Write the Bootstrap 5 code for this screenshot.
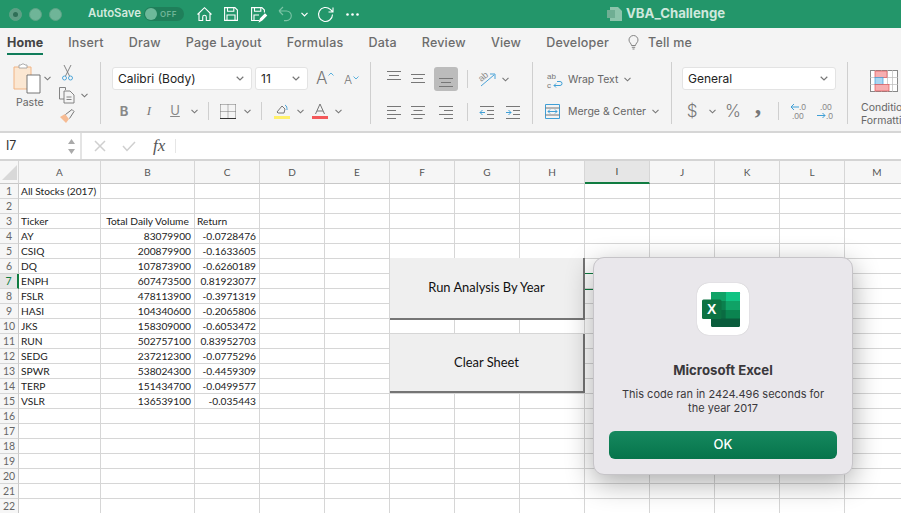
<!DOCTYPE html>
<html lang="en">
<head>
  <meta charset="UTF-8">
  <title>VBA_Challenge</title>
  <meta name="viewport" content="width=device-width, initial-scale=1">
  <link href="https://cdn.jsdelivr.net/npm/bootstrap@5.3.3/dist/css/bootstrap.min.css" rel="stylesheet">
  <style>
html, body { height: 513px; overflow: hidden; }
body { font-family: "Inter", "Liberation Sans", sans-serif; background: #fff; color: #444; }
svg { display: block; overflow: visible; }

/* title bar */
.title-bar { height: 28px; background: #23966a; color: #d3eadf; position: relative; }
.light { width: 13px; height: 13px; border-radius: 50%; background: #6fb598; border: 1px solid #5da386; }
.light-close { background: #5f9e85; position: relative; }
.light-close::after { content: ""; position: absolute; left: 3px; top: 3px; width: 5px; height: 5px; border-radius: 50%; background: #2f6f57; }
.lights { padding-left: 9px; gap: 7px; width: 88px; }
.autosave { font-size: 11.4px; font-weight: 600; width: 56px; }
.auto-toggle { width: 40px; height: 14px; border-radius: 7px; background: #1f7f5a; font-size: 8px; font-weight: 600; color: #6fb598; letter-spacing: .4px; gap: 3px; padding-left: 1px; }
.auto-knob { width: 12px; height: 12px; border-radius: 50%; background: #6db99a; }
.quick { margin-left: 8px; }
.quick > span { display: flex; justify-content: center; }
.q1 { width: 25px; } .q2 { width: 28px; } .q3 { width: 28px; } .q4 { width: 24px; } .q5 { width: 14px; } .q6 { width: 28px; } .q7 { width: 26px; }
.doc-title { position: absolute; left: 607px; top: 0; height: 28px; gap: 4px; font-size: 13.2px; font-weight: 700; color: #cfe8dd; }

/* tabs */
.tab-row { height: 30px; background: #f4f4f4; padding-left: 7px; gap: 25px; font-size: 12.5px; font-weight: 500; color: #6c6c6c; letter-spacing: .2px; }
.tab-item { height: 30px; line-height: 29px; white-space: nowrap; }
.tab-on { color: #444; font-weight: 700; letter-spacing: .1px; position: relative; }
.tab-on::after { content: ""; position: absolute; left: 0; right: 0; bottom: 3px; height: 2px; background: #107c5a; }
.tell { gap: 9px; margin: -1px 0 0 -6px; }

/* ribbon */
.ribbon { height: 75px; background: #f4f4f4; border-bottom: 2px solid #d6d6d6; overflow: hidden; }
.rb-group { height: 62px; margin-top: 4px; border-right: 1px solid #cfcfcf; flex: none; }
.rb-row { height: 24px; display: grid; align-items: center; justify-items: center; }
.rb-rows { display: flex; flex-direction: column; gap: 9px; padding-top: 5px; }
.g-paste { width: 101px; display: grid; grid-template-columns: 59px 42px; }
.paste-col { padding: 1px 0 0 13px; }
.paste-label { font-size: 10.5px; color: #666; margin-top: 2px; padding-left: 3px; }
.clip-col { gap: 6px; padding-top: 3px; }
.clip-line { display: grid; grid-template-columns: 16px 18px; justify-items: center; align-items: center; }
.g-font { width: 270px; padding-left: 11px; }
.font-top { display: flex; align-items: center; gap: 3px; }
.sel-font { width: 140px; }
.sel-size { width: 53px; }
.sel-num { width: 154px; }
.form-select.xl-sel { height: 23px; min-height: 0; padding: 0 14px 0 5px; font-size: 12px; color: #222; border: 1px solid #e3e3e3; border-radius: 3px; background-image: url("data:image/svg+xml,%3csvg xmlns='http://www.w3.org/2000/svg' viewBox='0 0 8 5'%3e%3cpath fill='none' stroke='%23777' stroke-width='1.2' d='M.7.8 4 4 7.300.8'/%3e%3c/svg%3e"); background-position: right 7px center; background-size: 8px 5px; box-shadow: none; }
.grow-wrap { display: flex; align-items: flex-end; color: #777; line-height: 1; font-weight: 300; }
.grow-big { font-size: 17px; width: 28px; margin-left: 5px; }
.grow-small { font-size: 12px; margin-left: -3px; padding-top: 3px; }
.grow-wrap svg { align-self: flex-start; margin: 2px 0 0 1px; }
.r-font2 { grid-template-columns: 22px 28px 24px 14px 14px 26px 12px 16px 26px 10px 30px 6px; margin-left: 1px; }
.rb-b { font-size: 13px; font-weight: 700; color: #888; line-height: 1; }
.rb-i { font-size: 13px; font-style: italic; font-family: "Liberation Serif", serif; color: #777; }
.rb-u { font-size: 13px; color: #888; text-decoration: underline; }
.v-sep { width: 1px; height: 18px; background: #cfcfcf; }
.g-align { width: 162px; padding-left: 12px; }
.r-al1 { grid-template-columns: 22px 26px 30px 12px 28px 8px; }
.r-al2 { grid-template-columns: 22px 26px 30px 12px 28px 24px; }
.al-on { width: 24px; height: 24px; background: #bcbcbc; border-radius: 3px; display: flex; align-items: center; justify-content: center; }
.g-wrap { width: 139px; padding: 6px 0 0 12px; font-size: 10.5px; color: #666; gap: 9px; }
.wrap-line { display: flex; align-items: center; height: 23px; white-space: nowrap; }
.wrap-ic { width: 23px; flex: none; }
.wrap-line svg.chev { margin-left: 6px; }
.wrap-top svg.wrap-glyph { margin-left: 2px; }
.g-num { width: 176px; padding-left: 10px; }
.r-num2 { grid-template-columns: 20px 20px 22px 28px 12px 28px 26px; color: #777; }
.num-d { font-size: 17px; font-weight: 300; line-height: 1; }
.num-p { font-size: 17px; font-weight: 300; line-height: 1; }
.num-c { font-size: 26px; font-weight: 700; font-family: "Liberation Serif", serif; line-height: 1; margin-top: -11px; }
.g-cond { padding: 12px 0 0 13px; font-size: 10.5px; line-height: 13px; color: #666; white-space: nowrap; }
.cond-ic { margin: 0 0 9px 9px; }

/* formula bar */
.formula-bar { height: 28px; background: #fff; border-bottom: 2px solid #d4d4d4; font-size: 12.5px; color: #333; }
.name-box { width: 82px; height: 26px; border-right: 2px solid #e4e4e4; padding: 0 5px 0 6px; }
.fx-tools { width: 98px; height: 26px; padding-left: 12px; }
.fx-text { font-family: "Liberation Serif", serif; font-style: italic; font-size: 17px; color: #555; width: 22px; margin-left: 17px; }
.fx-sep { width: 1px; height: 14px; background: #e6e6e6; }

/* sheet */
.sheet-wrap { position: relative; height: 352px; overflow: hidden; }
.sheet-grid { table-layout: fixed; width: 910px; border-collapse: separate; border-spacing: 0; font-family: "Lato", "Liberation Sans", sans-serif; font-size: 10.2px; color: #222; }
.sheet-grid td, .sheet-grid th { border-right: 1px solid #d6d6d6; border-bottom: 1px solid #d6d6d6; height: 15px; padding: 0 2px; line-height: 13px; white-space: nowrap; overflow: hidden; }
.sheet-grid thead th { height: 23px; background: #f6f6f6; font-weight: 400; color: #555; text-align: center; font-size: 10px; border-bottom: 1px solid #c8c8c8; }
.sheet-grid tbody th { background: #f6f6f6; font-weight: 400; color: #666; text-align: center; padding: 0; font-size: 10.500px; border-right-color: #c8c8c8; }
.sheet-grid .cell-num { text-align: right; padding-right: 3px; }
.sheet-grid .cell-mid { text-align: center; padding: 0; }
.sheet-grid thead th.col-on { background: #e6e6e6; border-bottom: 2px solid #107c41; color: #444; }
.sheet-grid tbody th.row-on { border-right: 2px solid #107c41; color: #107c41; background: #e6e6e6; }
.sheet-grid .cell-sel { box-shadow: 0 0 0 1px #107c41; }
.corner { width: 0; height: 0; margin: 0 1px 0 auto; border-left: 15px solid transparent; border-bottom: 15px solid #d8d8d8; }

/* sheet buttons */
.macro-btn { position: absolute; left: 390px; width: 195px; padding: 0; border: 0; border-right: 2px solid #757575; border-bottom: 2px solid #757575; border-radius: 0; background: #efefef; color: #111; font-family: "Lato", "Liberation Sans", sans-serif; font-size: 12.9px; }
.macro-btn:hover { background: #efefef; color: #111; }
.macro-run { top: 97px; height: 62px; }
.macro-clear { top: 173px; height: 59px; }

/* dialog */
.xl-alert { position: absolute; left: 593px; top: 96px; width: 260px; height: 218px; background: #e9e7eb; border: 1px solid #c6c4c8; border-radius: 11px; box-shadow: 0 8px 28px rgba(0,0,0,.33); padding: 25px 15px 15px; text-align: center; color: #3a383c; }
.app-icon { width: 52px; height: 52px; background: #fff; border-radius: 12px; margin: 0 auto 27px; box-shadow: 0 0 1px rgba(0,0,0,.25); display: flex; align-items: center; justify-content: center; }
.app-icon svg { margin-left: -4px; }
.alert-title { font-size: 13.2px; font-weight: 700; line-height: 16px; margin-bottom: 9px; }
.alert-text { font-size: 11px; line-height: 14px; margin: 0 0 16px; }
.alert-ok { width: 100%; height: 28px; padding: 0; border: 0; border-radius: 6px; background: linear-gradient(#16895f, #06744b); color: #fff; font-size: 13px; font-weight: 500; }
  </style>
</head>
<body>

  <div class="title-bar d-flex align-items-center">
    <div class="lights d-flex">
      <span class="light light-close"></span><span class="light"></span><span class="light"></span>
    </div>
    <span class="autosave">AutoSave</span>
    <span class="auto-toggle d-flex align-items-center"><span class="auto-knob"></span>OFF</span>
    <div class="quick d-flex align-items-center">
      <span class="q1"><svg width="15" height="14" viewBox="0 0 15 14" fill="none" stroke="#fff" stroke-width="1.100"><path d="M.5 7.500 7.500.7l7 6.800M2 6.500v7h3.700V10a1.800 1.800 0 0 1 3.600 0v3.500H13v-7"/></svg></span>
      <span class="q2"><svg width="14" height="14" viewBox="0 0 14 14" fill="none" stroke="#fff" stroke-width="1.100"><path d="M.6.6h10.300l2.500 2.500v10.300H.6zM3.500.6v3.700h6.300V.6M3 13.400V8h8v5.400"/></svg></span>
      <span class="q3"><svg width="16" height="15" viewBox="0 0 16 15" fill="none" stroke="#fff" stroke-width="1.100"><path d="M8 13.500H.6V.6h10.300L13.400 3v2.500M3.500.6v3.700h6.300V.6M3 13.400V8h5"/><path d="M8.500 14.500l1-3 4.500-4.500 1.500 1.500-4.500 4.500z" fill="#fff"/></svg></span>
      <span class="q4"><svg width="14" height="16" viewBox="0 0 14 16" fill="none" stroke="#7cc4a6" stroke-width="1.100"><path d="M1 5h7.500a4.800 4.800 0 0 1 0 9.600H6M1 5l4-4M1 5l4 4"/></svg></span>
      <span class="q5"><svg width="7" height="5" viewBox="0 0 7 5" fill="none" stroke="#fff" stroke-width="1.200"><path d="M.5.8l3 3 3-3"/></svg></span>
      <span class="q6"><svg width="17" height="17" viewBox="0 0 17 17" fill="none" stroke="#fff" stroke-width="1.100"><path d="M15.500 8.500a7 7 0 1 1-2.200-5.100L16 6M16 1.500V6h-4.500"/></svg></span>
      <span class="q7"><svg width="13" height="3" viewBox="0 0 13 3" fill="#fff"><circle cx="1.500" cy="1.500" r="1.300"/><circle cx="6.500" cy="1.500" r="1.300"/><circle cx="11.500" cy="1.500" r="1.300"/></svg></span>
    </div>
    <div class="doc-title d-flex align-items-center">
      <svg width="15" height="14" viewBox="0 0 15 14"><path d="M3 0h8l4 4v10H3z" fill="#8cc4ab"/><rect y="3" width="8" height="8" fill="#6fae93"/></svg>
      VBA_Challenge
    </div>
  </div>

  <nav class="tab-row d-flex">
    <span class="tab-item tab-on">Home</span>
    <span class="tab-item">Insert</span>
    <span class="tab-item">Draw</span>
    <span class="tab-item">Page Layout</span>
    <span class="tab-item">Formulas</span>
    <span class="tab-item">Data</span>
    <span class="tab-item">Review</span>
    <span class="tab-item">View</span>
    <span class="tab-item">Developer</span>
    <span class="tab-item tell d-flex align-items-center">
      <svg width="11" height="15" viewBox="0 0 11 15" fill="none" stroke="#777" stroke-width=".9"><path d="M3.500 10.500C3.500 8.500 1 7.500 1 5a4.500 4.500 0 0 1 9 0c0 2.500-2.500 3.500-2.500 5.500zM3.800 12.300h3.400M4.500 14h2"/></svg>
      <span>Tell me</span>
    </span>
  </nav>

  <div class="ribbon d-flex">
    <div class="rb-group g-paste">
      <div class="paste-col">
        <div class="d-flex align-items-center">
          <svg width="27" height="30" viewBox="0 0 27 30" fill="none"><path d="M1 4h17v22H1z" fill="#fbe7d2" stroke="#f1b484"/><path d="M6 4V2h2l1-1h2l1 1h2v3H6z" fill="#fff" stroke="#999" stroke-width=".8"/><path d="M14 12h13v18H14z" fill="#fff" stroke="#666" stroke-width=".9"/></svg>
          <svg class="ms-1" width="7" height="5" viewBox="0 0 7 5" fill="none" stroke="#777" stroke-width="1.100"><path d="M.5.8l3 3 3-3"/></svg>
        </div>
        <div class="paste-label">Paste</div>
      </div>
      <div class="clip-col d-flex flex-column">
        <div class="clip-line">
          <svg width="11" height="16" viewBox="0 0 11 16" fill="none" stroke="#777" stroke-width=".9"><path d="M2 0l5.500 11M9 0 3.500 11"/><circle cx="2.500" cy="13" r="2" stroke="#3f9fd6"/><circle cx="8.500" cy="13" r="2" stroke="#3f9fd6"/></svg>
          <span></span>
        </div>
        <div class="clip-line">
          <svg width="16" height="16" viewBox="0 0 16 16" fill="none" stroke="#777" stroke-width=".9"><path d="M5 12H.5V.5h6V3"/><path d="M5 4h6l4 4v8H5zM7.500 10h5M7.500 12.500h5"/></svg>
          <svg width="7" height="5" viewBox="0 0 7 5" fill="none" stroke="#777" stroke-width="1.100"><path d="M.5.8l3 3 3-3"/></svg>
        </div>
        <div class="clip-line">
          <svg width="16" height="14" viewBox="0 0 16 14"><path d="M1 8l5-3 4 5-3 4z" fill="#f6bb93"/><path d="M6.500 5.500 13 .5l2 2-4.500 7" fill="none" stroke="#777"/></svg>
          <span></span>
        </div>
      </div>
    </div>

    <div class="rb-group g-font rb-rows">
      <div class="font-top">
        <select class="form-select xl-sel sel-font"><option>Calibri (Body)</option></select>
        <select class="form-select xl-sel sel-size"><option>11</option></select>
        <span class="grow-wrap grow-big">A<svg width="6" height="4" viewBox="0 0 6 4" fill="none" stroke="#5bb1dd"><path d="M.5 3.500 3 1l2.500 2.500"/></svg></span>
        <span class="grow-wrap grow-small">A<svg width="6" height="4" viewBox="0 0 6 4" fill="none" stroke="#5bb1dd"><path d="M.5.5 3 3 5.500.5"/></svg></span>
      </div>
      <div class="rb-row r-font2">
        <span class="rb-b">B</span>
        <span class="rb-i">I</span>
        <span class="rb-u">U</span>
        <svg width="7" height="5" viewBox="0 0 7 5" fill="none" stroke="#777" stroke-width="1.100"><path d="M.5.8l3 3 3-3"/></svg>
        <span class="v-sep"></span>
        <svg width="16" height="15" viewBox="0 0 16 15" fill="none" stroke="#777"><path d="M.5.500h15M.5 7.500h15M8 .5v14M.5.500v14M15.500.5v14" stroke-dasharray="1 1"/><path d="M0 14.500h16" stroke="#333"/></svg>
        <svg width="7" height="5" viewBox="0 0 7 5" fill="none" stroke="#777" stroke-width="1.100"><path d="M.5.8l3 3 3-3"/></svg>
        <span class="v-sep"></span>
        <svg width="16" height="16" viewBox="0 0 16 16"><path d="M3 9l5-6 3 3-1 4H4z" fill="none" stroke="#777"/><path d="M11 2c2 1 2 3 2 5" fill="none" stroke="#4aa3d8"/><rect y="13" width="16" height="3" fill="#fff06a"/></svg>
        <svg width="7" height="5" viewBox="0 0 7 5" fill="none" stroke="#777" stroke-width="1.100"><path d="M.5.8l3 3 3-3"/></svg>
        <svg width="16" height="16" viewBox="0 0 16 16"><path d="M3.500 11 8 1l4.500 10M5 8h6" fill="none" stroke="#777"/><rect y="13" width="16" height="3" fill="#f4585a"/></svg>
        <svg width="7" height="5" viewBox="0 0 7 5" fill="none" stroke="#777" stroke-width="1.100"><path d="M.5.8l3 3 3-3"/></svg>
      </div>
    </div>

    <div class="rb-group g-align rb-rows">
      <div class="rb-row r-al1">
        <svg width="14" height="18" viewBox="0 0 14 18" stroke="#777"><path d="M0 1.500h14M2 5.500h10M0 9.500h14"/></svg>
        <svg width="14" height="18" viewBox="0 0 14 18" stroke="#777"><path d="M0 4.500h14M2 8.500h10M0 12.500h14"/></svg>
        <span class="al-on"><svg width="14" height="18" viewBox="0 0 14 18" stroke="#777"><path d="M0 8.500h14M2 12.500h10M0 16.500h14"/></svg></span>
        <span class="v-sep"></span>
        <svg width="17" height="16" viewBox="0 0 17 16" fill="none"><path d="M2 15 15 4M11 3h5v5" stroke="#4aa3d8"/><text x="0" y="9" font-size="9" fill="#888" font-family="Liberation Sans" transform="rotate(-40 4 7)">ab</text></svg>
        <svg width="7" height="5" viewBox="0 0 7 5" fill="none" stroke="#777" stroke-width="1.100"><path d="M.5.8l3 3 3-3"/></svg>
      </div>
      <div class="rb-row r-al2">
        <svg width="14" height="13" viewBox="0 0 14 13" stroke="#777"><path d="M0 .5h14M0 4.500h9M0 8.500h14M0 12.500h9"/></svg>
        <svg width="14" height="13" viewBox="0 0 14 13" stroke="#777"><path d="M0 .5h14M2.500 4.500h9M0 8.500h14M2.500 12.500h9"/></svg>
        <svg width="14" height="13" viewBox="0 0 14 13" stroke="#777"><path d="M0 .5h14M5 4.500h9M0 8.500h14M5 12.500h9"/></svg>
        <span class="v-sep"></span>
        <svg width="14" height="13" viewBox="0 0 14 13" fill="none"><path d="M0 .5h14M7 4.500h7M7 8.500h7M0 12.500h14" stroke="#777"/><path d="M5 6.500H0M2.500 4 0 6.500 2.500 9" stroke="#3f9fd6"/></svg>
        <svg width="14" height="13" viewBox="0 0 14 13" fill="none"><path d="M0 .5h14M7 4.500h7M7 8.500h7M0 12.500h14" stroke="#777"/><path d="M0 6.500h5M2.500 4 5 6.500 2.500 9" stroke="#3f9fd6"/></svg>
      </div>
    </div>

    <div class="rb-group g-wrap rb-rows">
      <div class="wrap-line wrap-top">
        <span class="wrap-ic"><svg class="wrap-glyph" width="16" height="16" viewBox="0 0 16 16" fill="none"><text x="0" y="6.500" font-size="8" fill="#777" font-family="Liberation Sans">ab</text><text x="0" y="15.500" font-size="8" fill="#777" font-family="Liberation Sans">c</text><path d="M10 9.500h3a2 2 0 0 1 0 4H7M9 11.500l-2 2 2 2" stroke="#3f9fd6"/></svg></span>
        Wrap Text
        <svg class="chev" width="7" height="5" viewBox="0 0 7 5" fill="none" stroke="#777" stroke-width="1.100"><path d="M.5.8l3 3 3-3"/></svg>
      </div>
      <div class="wrap-line">
        <span class="wrap-ic"><svg width="15" height="15" viewBox="0 0 15 15" fill="none"><path d="M.5.5h14v14H.5z" stroke="#3f9fd6"/><path d="M.5 4h14M.5 11h14" stroke="#777"/><path d="M3 7.500h9M5 5.500l-2 2 2 2M10 5.500l2 2-2 2" stroke="#3f9fd6"/></svg></span>
        Merge &amp; Center
        <svg class="chev" width="7" height="5" viewBox="0 0 7 5" fill="none" stroke="#777" stroke-width="1.100"><path d="M.5.8l3 3 3-3"/></svg>
      </div>
    </div>

    <div class="rb-group g-num rb-rows">
      <div class="font-top"><select class="form-select xl-sel sel-num"><option>General</option></select></div>
      <div class="rb-row r-num2">
        <span class="num-d">$</span>
        <svg width="7" height="5" viewBox="0 0 7 5" fill="none" stroke="#777" stroke-width="1.100"><path d="M.5.8l3 3 3-3"/></svg>
        <span class="num-p">%</span>
        <span class="num-c">,</span>
        <span class="v-sep"></span>
        <svg width="16" height="16" viewBox="0 0 16 16" fill="none"><path d="M9 4H1M4 1 1 4l3 3" stroke="#3f9fd6"/><text x="9" y="7" font-size="8.500" fill="#888" font-family="Liberation Sans">.0</text><text x="2" y="15.500" font-size="8.500" fill="#888" font-family="Liberation Sans">.00</text></svg>
        <svg width="16" height="16" viewBox="0 0 16 16" fill="none"><text x="3" y="7" font-size="8.500" fill="#888" font-family="Liberation Sans">.00</text><path d="M0 12.500h8M5.500 10l2.500 2.500L5.500 15" stroke="#3f9fd6"/><text x="9" y="15.500" font-size="8.500" fill="#888" font-family="Liberation Sans">.0</text></svg>
      </div>
    </div>

    <div class="g-cond">
      <svg class="cond-ic" width="28" height="22" viewBox="0 0 28 22"><rect x=".5" y=".5" width="27" height="21" fill="#fff" stroke="#888"/><path d="M5.500 0v22M11.500 0v22M17.500 0v22M22.500 0v22M0 7.500h28M0 14.500h28" stroke="#bbb" stroke-width=".7"/><rect x="5" y="1" width="12" height="6.500" fill="#f7aeb0" stroke="#e0585a" stroke-width=".7"/><rect x="5" y="7.500" width="8" height="7" fill="#a9d6f2" stroke="#3f9fd6" stroke-width=".7"/><rect x="5" y="14.500" width="14" height="6.500" fill="#f7aeb0" stroke="#e0585a" stroke-width=".7"/></svg>
      <div>Conditional</div>
      <div>Formatting</div>
    </div>
  </div>

  <div class="formula-bar d-flex align-items-center">
    <div class="name-box d-flex align-items-center justify-content-between">
      <span>I7</span>
      <svg width="7" height="15" viewBox="0 0 7 15" fill="#aaa"><path d="M3.500 0 7 5H0zM3.500 15 0 10h7z"/></svg>
    </div>
    <div class="fx-tools d-flex align-items-center">
      <svg width="12" height="12" viewBox="0 0 12 12" stroke="#cfcfcf" stroke-width="1.500"><path d="M1 1l10 10M11 1 1 11"/></svg>
      <svg class="ms-3" width="14" height="11" viewBox="0 0 14 11" fill="none" stroke="#cfcfcf" stroke-width="1.500"><path d="M1 5l4 4.500L13 1"/></svg>
      <span class="fx-text">fx</span>
      <span class="fx-sep"></span>
    </div>
  </div>

  <div class="sheet-wrap">
    <table class="sheet-grid">
      <colgroup id="sheetCols"></colgroup>
      <thead><tr id="sheetHead"></tr></thead>
      <tbody id="sheetBody"></tbody>
    </table>

    <button class="btn macro-btn macro-run">Run Analysis By Year</button>
    <button class="btn macro-btn macro-clear">Clear Sheet</button>

    <div class="xl-alert">
      <div class="app-icon">
        <svg width="38" height="35" viewBox="0 0 38 35">
          <rect x="9" y="0" width="29" height="35" rx="1.500" fill="#0a5c3c"/>
          <rect x="9" y="0" width="14.500" height="9" fill="#10a266"/>
          <rect x="23.500" y="0" width="14.500" height="9" fill="#10c383"/>
          <rect x="9" y="9" width="14.500" height="9" fill="#0b7f4d"/>
          <rect x="23.500" y="9" width="14.500" height="9" fill="#10a266"/>
          <rect x="9" y="18" width="14.500" height="8.500" fill="#0b6b42"/>
          <rect x="23.500" y="18" width="14.500" height="8.500" fill="#0b8450"/>
          <rect x="0" y="7.500" width="19.500" height="19.500" rx="1.500" fill="#0c7343"/>
          <text x="9.700" y="22" text-anchor="middle" font-size="14" font-weight="700" fill="#fff" font-family="Liberation Sans">X</text>
        </svg>
      </div>
      <div class="alert-title">Microsoft Excel</div>
      <p class="alert-text">This code ran in 2424.496 seconds for<br>the year 2017</p>
      <button class="btn alert-ok">OK</button>
    </div>
  </div>

  <script>
    const colWidths = [19, 82, 94, 65, 65, 65, 65, 65, 65, 65, 65, 65, 65, 65];
    const letters = "ABCDEFGHIJKLM".split("");
    const data = {
      1: ["All Stocks (2017)"],
      3: ["Ticker", "Total Daily Volume", "Return"],
      4: ["AY", 83079900, "-0.0728476"],
      5: ["CSIQ", 200879900, "-0.1633605"],
      6: ["DQ", 107873900, "-0.6260189"],
      7: ["ENPH", 607473500, "0.81923077"],
      8: ["FSLR", 478113900, "-0.3971319"],
      9: ["HASI", 104340600, "-0.2065806"],
      10: ["JKS", 158309000, "-0.6053472"],
      11: ["RUN", 502757100, "0.83952703"],
      12: ["SEDG", 237212300, "-0.0775296"],
      13: ["SPWR", 538024300, "-0.4459309"],
      14: ["TERP", 151434700, "-0.0499577"],
      15: ["VSLR", 136539100, "-0.035443"]
    };

    document.getElementById("sheetCols").innerHTML = colWidths.map(w => `<col width="${w}">`).join("");
    document.getElementById("sheetHead").innerHTML = `<th><div class="corner"></div></th>` +
      letters.map(l => `<th class="${l === "I" ? "col-on" : ""}">${l}</th>`).join("");

    let rows = "";
    for (let r = 1; r <= 22; r++) {
      const vals = data[r] || [];
      rows += `<tr><th class="${r === 7 ? "row-on" : ""}">${r}</th>`;
      letters.forEach((l, i) => {
        const v = vals[i] === undefined ? "" : vals[i];
        let cls = (r >= 4 && i > 0 && i < 3) ? "cell-num" : "";
        if (r === 3 && i === 1) cls = "cell-mid";
        if (r === 7 && l === "I") cls += " cell-sel";
        rows += `<td class="${cls}">${v}</td>`;
      });
      rows += "</tr>";
    }
    document.getElementById("sheetBody").innerHTML = rows;
  </script>
  <script src="https://cdn.jsdelivr.net/npm/bootstrap@5.3.3/dist/js/bootstrap.bundle.min.js"></script>
</body>
</html>
